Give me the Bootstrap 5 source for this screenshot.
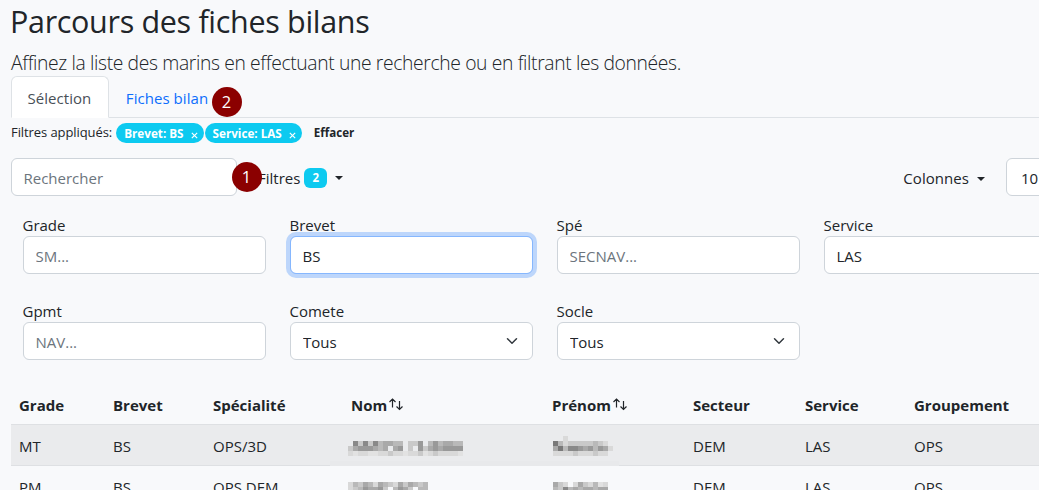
<!DOCTYPE html>
<html lang="fr">
<head>
<meta charset="utf-8">
<meta name="viewport" content="width=device-width, initial-scale=1">
<title>Parcours des fiches bilans</title>
<link href="https://cdn.jsdelivr.net/npm/bootstrap@5.3.0/dist/css/bootstrap.min.css" rel="stylesheet">
<style>
  body { font-family: "Open Sans", "Noto Sans", sans-serif; font-size: 15px; background: #f8f9fb; color: #212529; }
  .viewport { height: 490px; overflow: hidden; }
  .page { width: 1068px; margin-left: 11px; }
  .title { font-size: 30.5px; line-height: 38px; padding-top: 2px; height: 41px; letter-spacing: -.32px; margin-left: -1px; }
  .intro { font-size: 19.3px; line-height: 28px; padding-top: 8px; height: 35px; letter-spacing: -.36px; }
  .nav-tabs { height: 42px; border-color: #dee2e6; }
  .nav-tabs .nav-link { padding: 9px 16px 8px; line-height: 24px; height: 42px; letter-spacing: .05px; }
  .nav-tabs .nav-link.active { color: #495057; padding-left: 15.500px; padding-right: 16.500px; }
  .pills { height: 28px; font-size: 13px; padding-top: 1px; }
  .pills .lead-in { letter-spacing: -.08px; margin-right: 4px; }
  .pills .badge { font-size: 11.7px; height: 20px; line-height: 20px; padding: 0 6px 0 8px; margin-right: 1px; }
  .pills .badge svg { margin-left: 7px; vertical-align: -1px; }
  .clear { font-size: 11.6px; margin-left: 11px; }
  .tools { margin-top: 12px; height: 38px; }
  .search { width: 226px; }
  .filter-toggle { margin-left: -3px; }
  .count { font-size: 11.5px; width: 23px; height: 20px; line-height: 20px; padding: 0; margin-left: 4px; }
  .dropdown-toggle { padding-top: 2px; }
  .dropdown-toggle::after { margin-left: 8px; vertical-align: 3px; }
  .columns-toggle { margin-right: 21px; letter-spacing: .05px; }
  .page-size { width: 73px; padding-left: 14px; }
  .filters { margin-top: 16px; row-gap: 24px; }
  .filters label { display: block; line-height: 24px; height: 24px; padding-top: 1px; margin-left: -.5px; }
  .form-control, .form-select { height: 38px; font-size: 15px; border-color: #ced4da; padding-top: 7px; padding-bottom: 5px; line-height: 24px; color: #212529; }
  .form-control { padding-left: 11.5px; }
  .form-control::placeholder { color: #6c757d; }
  .focused { border-color: #86b7fe; box-shadow: 0 0 0 4px rgba(13, 110, 253, .25); }
  .marker { position: absolute; width: 30px; height: 30px; border-radius: 50%; background: #8b0000; color: #fff; font-size: 16.5px; line-height: 29px; text-align: center; z-index: 3; }
  .marker-tab { left: 200.500px; top: 10.500px; }
  .marker-filter { left: 220.500px; top: 3.500px; }
  .records { table-layout: fixed; width: 1068px; margin-top: 24px; line-height: 24px; border-collapse: separate; border-spacing: 0; color: #212529; }
  .records tr { height: 41px; }
  .records th, .records td { padding: 9px 8px 7px; height: 41px; border-bottom: 1px solid #dee0e3; white-space: nowrap; }
  .records .shade td { background: #eaebed; }
  .records .hidden-name { padding: 0; position: relative; }
  .hidden-name svg { position: absolute; top: 11px; }
  .sort { vertical-align: 0; margin-left: 1px; }
  .smear { position: absolute; top: 36px; height: 5px; background: #e8e9eb; }
</style>
</head>
<body>
<div class="viewport">
<main class="page">
  <h1 class="title mb-0 fw-normal">Parcours des fiches bilans</h1>
  <p class="intro fw-light mb-0">Affinez la liste des marins en effectuant une recherche ou en filtrant les données.</p>
  <ul class="nav nav-tabs position-relative">
    <li class="nav-item"><a class="nav-link active" href="#">Sélection</a></li>
    <li class="nav-item"><a class="nav-link" href="#">Fiches bilan</a></li>
    <li class="marker marker-tab">2</li>
  </ul>
  <div class="pills d-flex align-items-center">
    <span class="lead-in">Filtres appliqués:</span>
    <span class="badge rounded-pill bg-info text-white">Brevet: BS<svg width="7" height="7" viewBox="0 0 6 6" stroke="#fff" stroke-width="1"><path d="M.7.7l4.600 4.600M5.300.7L.7 5.300"/></svg></span>
    <span class="badge rounded-pill bg-info text-white">Service: LAS<svg width="7" height="7" viewBox="0 0 6 6" stroke="#fff" stroke-width="1"><path d="M.7.7l4.600 4.600M5.300.7L.7 5.300"/></svg></span>
    <span class="clear fw-bold">Effacer</span>
  </div>
  <div class="tools d-flex align-items-center position-relative">
    <input class="form-control search" placeholder="Rechercher">
    <span class="marker marker-filter">1</span>
    <div class="dropdown-toggle d-flex align-items-center ps-4 filter-toggle" role="button"><span>Filtres</span><span class="badge bg-info count">2</span></div>
    <div class="dropdown-toggle ms-auto columns-toggle" role="button">Colonnes</div>
    <select class="form-select page-size"><option>10</option></select>
  </div>
  <div class="row mx-0 filters">
    <div class="col-3"><label>Grade</label><input class="form-control" placeholder="SM..."></div>
    <div class="col-3"><label>Brevet</label><input class="form-control focused" value="BS"></div>
    <div class="col-3"><label>Spé</label><input class="form-control" placeholder="SECNAV..."></div>
    <div class="col-3"><label>Service</label><input class="form-control" value="LAS"></div>
    <div class="col-3"><label>Gpmt</label><input class="form-control" placeholder="NAV..."></div>
    <div class="col-3"><label>Comete</label><select class="form-select"><option>Tous</option></select></div>
    <div class="col-3"><label>Socle</label><select class="form-select"><option>Tous</option></select></div>
  </div>
  <table class="records">
    <colgroup><col style="width:94px"><col style="width:100px"><col style="width:138px"><col style="width:201px"><col style="width:141px"><col style="width:112px"><col style="width:109px"><col></colgroup>
    <thead>
      <tr><th>Grade</th><th>Brevet</th><th>Spécialité</th>
        <th>Nom<svg class="sort" width="16" height="14" viewBox="0 0 16 14" fill="none" stroke="#212529" stroke-width="1.2"><path d="M4.500 10.500V2M1.500 5l3-3 3 3M11.500 4v8.500M8.500 9.500l3 3 3-3"/></svg></th>
        <th>Prénom<svg class="sort" width="16" height="14" viewBox="0 0 16 14" fill="none" stroke="#212529" stroke-width="1.2"><path d="M4.500 10.500V2M1.500 5l3-3 3 3M11.500 4v8.500M8.500 9.500l3 3 3-3"/></svg></th>
        <th>Secteur</th><th>Service</th><th>Groupement</th></tr>
    </thead>
    <tbody>
      <tr class="shade"><td>MT</td><td>BS</td><td>OPS/3D</td>
        <td class="hidden-name"><svg data-x="5" data-rows=".......................|.8c8c8baabb.cc9.b9baabb|ca999aba.a9.c.9ca9a9999|deddeeddcddeddcedcdddde"></svg><div class="smear" style="left:-13px;width:214px"></div></td>
        <td class="hidden-name"><svg data-x="9" data-rows="..d.........|7bdcccccbcd.|a7b889a9b9ad|ddddcdddcdd."></svg><div class="smear" style="left:0;width:75px"></div></td>
        <td>DEM</td><td>LAS</td><td>OPS</td></tr>
      <tr><td>PM</td><td>BS</td><td>OPS DEM</td>
        <td class="hidden-name"><svg data-x="5" data-rows="................|dbcabdabcdacabcb|dcb9aa9c.b9ac.bb"></svg></td>
        <td class="hidden-name"><svg data-x="9" data-rows="...........|acd.dacdbed|bc8babaabaa"></svg></td>
        <td>DEM</td><td>LAS</td><td>OPS</td></tr>
    </tbody>
  </table>
</main>
</div>
<script src="https://cdn.jsdelivr.net/npm/bootstrap@5.3.0/dist/js/bootstrap.bundle.min.js"></script>
<script>
  // Anonymised names: each hex digit is the grey level of one 5px cell.
  document.querySelectorAll('svg[data-rows]').forEach(function (svg) {
    var rows = svg.dataset.rows.split('|');
    svg.setAttribute('width', rows[0].length * 5);
    svg.setAttribute('height', rows.length * 5);
    svg.style.left = svg.dataset.x + 'px';
    rows.forEach(function (row, y) {
      row.split('').forEach(function (level, x) {
        if (level === '.') return;
        var cell = document.createElementNS('http://www.w3.org/2000/svg', 'rect');
        cell.setAttribute('x', x * 5);
        cell.setAttribute('y', y * 5);
        cell.setAttribute('width', 5);
        cell.setAttribute('height', 5);
        cell.setAttribute('fill', '#' + (level + (level === 'e' ? '2' : '9')).repeat(3));
        svg.appendChild(cell);
      });
    });
  });
</script>
</body>
</html>
